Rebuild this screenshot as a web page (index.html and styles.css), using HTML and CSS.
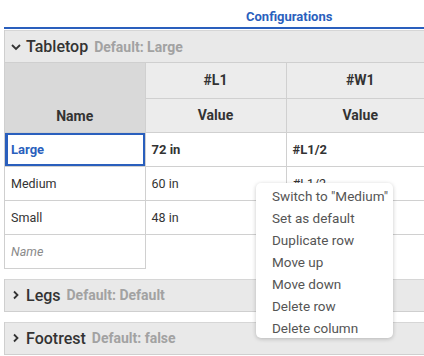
FILE: index.html
```html
<!DOCTYPE html>
<html lang="en">
<head>
    <meta charset="UTF-8">
    <title>Configurations</title>
    <link rel="stylesheet" href="styles.css">
</head>
<body>
    <div class="page">
        <div class="tabs">
            <span class="tab active">Configurations</span>
        </div>

        <div class="section open">
            <div class="section-head">
                <svg class="chev" width="12" height="12" viewBox="0 0 12 12"><path d="M2 4 L6 8 L10 4" fill="none" stroke="#333" stroke-width="1.8"/></svg>
                <span class="title">Tabletop</span>
                <span class="default">Default: Large</span>
            </div>
            <table class="grid">
                <thead>
                    <tr class="param-row">
                        <th rowspan="2" class="name-head">Name</th>
                        <th>#L1</th>
                        <th>#W1</th>
                    </tr>
                    <tr>
                        <th>Value</th>
                        <th>Value</th>
                    </tr>
                </thead>
                <tbody>
                    <tr class="current">
                        <td class="selected">Large</td>
                        <td>72 in</td>
                        <td>#L1/2</td>
                    </tr>
                    <tr>
                        <td>Medium</td>
                        <td>60 in</td>
                        <td>#L1/2</td>
                    </tr>
                    <tr>
                        <td>Small</td>
                        <td>48 in</td>
                        <td>#L1/2</td>
                    </tr>
                    <tr class="new-row">
                        <td class="placeholder">Name</td>
                        <td></td>
                        <td></td>
                    </tr>
                </tbody>
            </table>
        </div>

        <div class="section">
            <div class="section-head">
                <svg class="chev" width="12" height="12" viewBox="0 0 12 12"><path d="M4 2.5 L7.5 6 L4 9.5" fill="none" stroke="#333" stroke-width="1.8"/></svg>
                <span class="title">Legs</span>
                <span class="default">Default: Default</span>
            </div>
        </div>

        <div class="section">
            <div class="section-head">
                <svg class="chev" width="12" height="12" viewBox="0 0 12 12"><path d="M4 2.5 L7.5 6 L4 9.5" fill="none" stroke="#333" stroke-width="1.8"/></svg>
                <span class="title">Footrest</span>
                <span class="default">Default: false</span>
            </div>
        </div>
    </div>

    <ul class="menu">
        <li>Switch to "Medium"</li>
        <li>Set as default</li>
        <li>Duplicate row</li>
        <li>Move up</li>
        <li>Move down</li>
        <li>Delete row</li>
        <li>Delete column</li>
    </ul>
</body>
</html>
```

FILE: styles.css
```css
body {
    margin: 0;
    font-family: Roboto, "Noto Sans", sans-serif;
    color: #333;
    background: #fff;
    overflow: hidden;
}
.page {
    padding-left: 4px;
}
.tabs {
    height: 22px;
    padding-top: 5px;
    border-bottom: 2px solid #2a5fbd;
    display: flex;
    align-items: center;
    padding-left: 242px;
    margin-bottom: 1px;
}
.tab {
    font-size: 13px;
    font-weight: bold;
    color: #2a5fbd;
}
.section {
    border-left: 1px solid #cfcfcf;
    margin-bottom: 10px;
}
.section-head {
    height: 33px;
    box-sizing: border-box;
    background: #e9e9e9;
    border-top: 1px solid #d6d6d6;
    border-bottom: 1px solid #cfcfcf;
    display: flex;
    align-items: center;
    padding-left: 5px;
}
.chev {
    margin-right: 4px;
}
.title {
    font-size: 16px;
    font-weight: 500;
    color: #333;
    margin-right: 6px;
}
.default {
    font-size: 14px;
    font-weight: bold;
    color: #a2a2a2;
}
.grid {
    border-collapse: collapse;
    table-layout: fixed;
    width: 430px;
}
.grid th, .grid td {
    border: 1px solid #d0d0d0;
    border-top: none;
    height: 34px;
    padding: 0 6px;
    box-sizing: border-box;
}
.grid tbody td, .grid thead tr + tr th {
    border-top: 1px solid #d0d0d0;
}
.grid tr.param-row th {
    height: 35px;
}
.grid tr > :first-child {
    border-left: none;
    width: 140px;
}
.grid thead tr:first-child th:nth-child(2) {
    width: 141px;
}
.grid th {
    background: #ececec;
    font-size: 14px;
    font-weight: bold;
    text-align: center;
    color: #333;
}
.grid th.name-head {
    background: #d9d9d9;
    vertical-align: bottom;
    padding-bottom: 8px;
}
.grid td {
    text-align: left;
    font-size: 12.5px;
    color: #333;
}
.grid tr.current td {
    font-size: 13px;
    font-weight: bold;
}
.grid td.selected {
    color: #2a5fbd;
    box-shadow: inset 3px 0 0 #2a5fbd, inset 0 0 0 2px #2a5fbd;
}
.grid td.placeholder {
    font-style: italic;
    color: #8a8a8a;
}
.grid tr.new-row td:not(:first-child) {
    border-bottom: none;
    border-right: none;
}
.menu {
    position: absolute;
    left: 256px;
    top: 183px;
    width: 137px;
    margin: 0;
    padding: 2px 0 0 0;
    height: 155px;
    box-sizing: border-box;
    list-style: none;
    background: #fff;
    border-radius: 5px;
    box-shadow: 0 1px 4px rgba(0,0,0,0.22);
}
.menu li {
    height: 22px;
    line-height: 22px;
    padding-left: 16px;
    font-size: 13.5px;
    color: #555;
    white-space: nowrap;
}
```
